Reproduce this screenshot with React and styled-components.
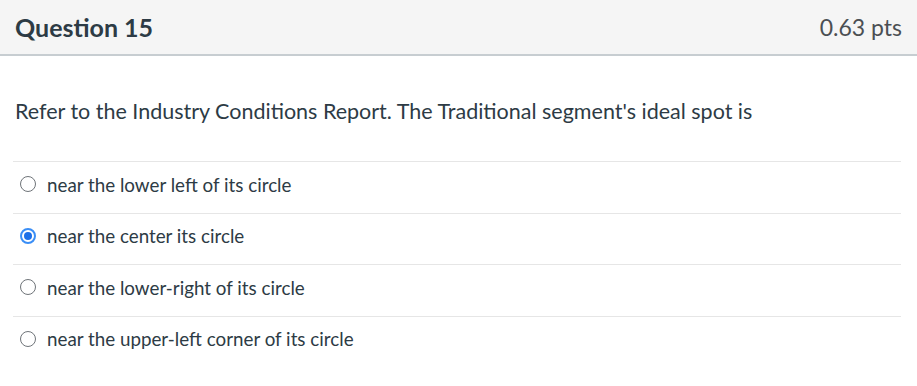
import React, { useState } from "react";
import styled, { createGlobalStyle } from "styled-components";

const GlobalStyle = createGlobalStyle`
    html, body {
        margin: 0;
        padding: 0;
        background: #ffffff;
    }
    body {
        font-family: Lato, "Liberation Sans", sans-serif;
        color: #2d3b45;
    }
`;

const Quiz = styled.div`
    width: 917px;
`;

const Header = styled.div`
    height: 54px;
    background: #f5f5f5;
    border-bottom: 2px solid #c7cdd1;
    display: flex;
    align-items: center;
    justify-content: space-between;
    padding: 0 15px 0 15px;
`;

const Title = styled.h2`
    margin: 0;
    font-size: 25px;
    font-weight: 700;
    color: #2d3b45;
`;

const Points = styled.span`
    font-size: 23px;
    color: #4b4f53;
`;

const Body = styled.div`
    padding: 40px 16px 0 13px;
`;

const QuestionText = styled.p`
    margin: 0 0 35px 2px;
    font-size: 21.5px;
    line-height: 30px;
    color: #2d3b45;
`;

const AnswerList = styled.div`
    display: flex;
    flex-direction: column;
`;

const Answer = styled.label`
    box-sizing: border-box;
    display: flex;
    align-items: center;
    gap: 11px;
    height: 51.5px;
    padding: 0 0 6px 7px;
    border-top: 1.5px solid #e6e6e6;
    font-size: 18.8px;
    color: #2d3b45;
    cursor: pointer;
`;

const Radio = styled.span`
    width: 16px;
    height: 16px;
    box-sizing: border-box;
    border-radius: 50%;
    border: ${(p) => (p.checked ? "2px solid #3a8ef6" : "1.5px solid #6f7479")};
    display: flex;
    align-items: center;
    justify-content: center;

    &::after {
        content: "";
        width: 8px;
        height: 8px;
        border-radius: 50%;
        background: #1c6fe8;
        display: ${(p) => (p.checked ? "block" : "none")};
    }
`;

const answers = [
    "near the lower left of its circle",
    "near the center its circle",
    "near the lower-right of its circle",
    "near the upper-left corner of its circle",
];

export default function App() {
    const [selected, setSelected] = useState(1);

    return (
        <Quiz>
            <GlobalStyle />
            <Header>
                <Title>Question 15</Title>
                <Points>0.63 pts</Points>
            </Header>
            <Body>
                <QuestionText>
                    Refer to the Industry Conditions Report. The Traditional segment's ideal spot is
                </QuestionText>
                <AnswerList>
                    {answers.map((a, i) => (
                        <Answer key={a} onClick={() => setSelected(i)}>
                            <Radio checked={selected === i} />
                            {a}
                        </Answer>
                    ))}
                </AnswerList>
            </Body>
        </Quiz>
    );
}
